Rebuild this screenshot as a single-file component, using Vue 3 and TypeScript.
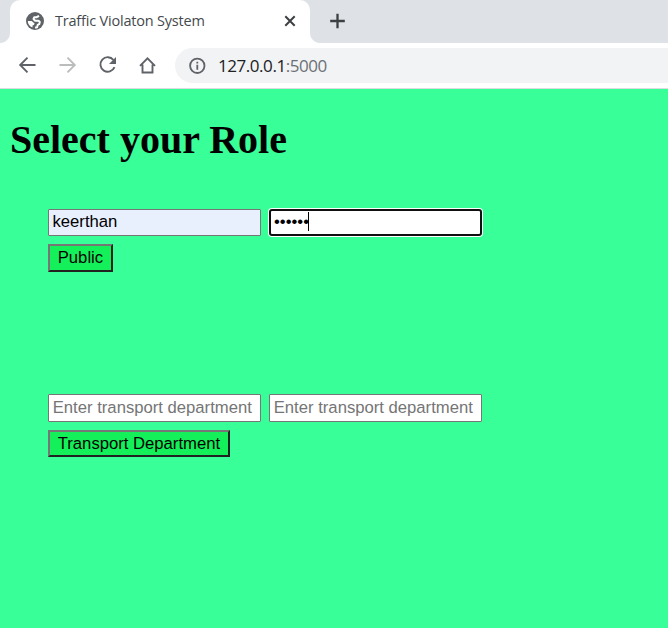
<script setup lang="ts">
import { ref } from 'vue'

const username = ref('keerthan')
const departmentUser = ref('')
const departmentPassword = ref('')
const mask = '•'.repeat(6)
</script>

<template>
  <div class="browser">
    <div class="tabstrip">
      <div class="tab">
        <svg class="globe" viewBox="0 0 20 20">
          <circle cx="10" cy="10" r="9" fill="#5f6368" />
          <path fill="none" stroke="#fff" stroke-width="2" stroke-linejoin="round" d="M14 4.800l-2.300 1.400H9.300L8.500 8l1.700 1.700h3.300l1.300 1.300-.6 2.200-1.500.7-.6 2.300-2 .6" />
          <path fill="#fff" d="M2.800 10h3.900l2.900 2.400-.7 1.500-1.400.5v2.100C4.700 15.500 2.800 13.200 2.800 10z" />
        </svg>
        <span class="title">Traffic Violaton System</span>
        <svg class="close" viewBox="0 0 12 12"><path d="M1.300 1.300l9.400 9.400M10.700 1.300L1.300 10.700" /></svg>
      </div>
      <svg class="plus" viewBox="0 0 16 16"><path d="M8.500 .7v14.600M1.200 8h14.600" /></svg>
    </div>
    <div class="toolbar">
      <svg class="nav" viewBox="0 0 20 20"><path d="M18.500 10H3.500M10.500 2.700L3.200 10l7.300 7.300" /></svg>
      <svg class="nav disabled" viewBox="0 0 20 20"><path d="M2.500 10h15M10.500 2.700l7.300 7.300-7.300 7.300" /></svg>
      <svg class="nav" viewBox="0 0 20 20">
        <path d="M16.500 5A7.300 7.300 0 1 0 17.500 12.200" />
        <path class="solid" d="M19 2v7h-7z" />
      </svg>
      <svg class="nav" viewBox="0 0 20 20"><path d="M3 10.800L10.500 3.300l7.500 7.500M5.500 9.500v8h10v-8" /></svg>
      <div class="address">
        <svg class="info" viewBox="0 0 18 18">
          <circle cx="9.300" cy="8.800" r="7.200" />
          <path d="M9.300 7.700v5.100M9.300 4.700v1.800" />
        </svg>
        <span class="url">127.0.0.1<span class="port">:5000</span></span>
      </div>
    </div>
    <main class="page">
      <h1>Select your Role</h1>
      <form class="role public" @submit.prevent>
        <div class="fields">
          <input v-model="username" class="field filled" type="text" />
          <div class="field focused"><span>{{ mask }}</span><i class="caret"></i></div>
        </div>
        <button type="button">Public</button>
      </form>
      <form class="role department" @submit.prevent>
        <div class="fields">
          <input v-model="departmentUser" class="field" type="text" placeholder="Enter transport department" />
          <input v-model="departmentPassword" class="field" type="text" placeholder="Enter transport department" />
        </div>
        <button type="button">Transport Department</button>
      </form>
    </main>
  </div>
</template>

<style>
body {
  margin: 0;
}
</style>

<style scoped>
.browser {
  width: 668px;
  height: 628px;
  display: flex;
  flex-direction: column;
  overflow: hidden;
  font-family: "Open Sans", "Noto Sans", sans-serif;
}
svg {
  display: block;
  flex: none;
}
.tabstrip {
  height: 43px;
  flex: none;
  display: flex;
  background: #dee1e6;
  padding-left: 10px;
}
.tab {
  position: relative;
  box-sizing: border-box;
  width: 300px;
  height: 43px;
  padding: 0 14px 1px 15px;
  display: flex;
  align-items: center;
  background: #fff;
  border-radius: 10px 10px 0 0;
}
.tab::before,
.tab::after {
  content: "";
  position: absolute;
  bottom: 0;
  width: 10px;
  height: 10px;
}
.tab::before {
  left: -10px;
  background: radial-gradient(circle at 0 0, transparent 9.500px, #fff 10.500px);
}
.tab::after {
  right: -10px;
  background: radial-gradient(circle at 100% 0, transparent 9.500px, #fff 10.500px);
}
.globe {
  width: 20px;
  height: 20px;
}
.title {
  flex: 1;
  margin-left: 10px;
  padding-bottom: 1px;
  font-size: 14.500px;
  letter-spacing: -0.200px;
  color: #45494d;
  white-space: nowrap;
}
.close {
  width: 12px;
  height: 12px;
}
.close path,
.plus path {
  fill: none;
  stroke: #3c4043;
  stroke-width: 2;
}
.plus {
  width: 16px;
  height: 16px;
  margin: 13px 0 0 19px;
}
.plus path {
  stroke-width: 2.300;
}
.toolbar {
  box-sizing: border-box;
  height: 46px;
  flex: none;
  display: flex;
  align-items: center;
  gap: 20px;
  padding-left: 17px;
  border-bottom: 1px solid #dadce0;
  background: #fff;
}
.nav {
  width: 20px;
  height: 20px;
  margin-bottom: 1px;
}
.nav path {
  fill: none;
  stroke: #5f6368;
  stroke-width: 1.900;
}
.nav .solid {
  fill: #5f6368;
  stroke: none;
}
.nav.disabled path {
  stroke: #babcbe;
}
.address {
  flex: 1;
  height: 35px;
  margin-left: -2px;
  padding-left: 13px;
  display: flex;
  align-items: center;
  background: #f1f3f4;
  border-radius: 18px 0 0 18px;
}
.info {
  width: 18px;
  height: 18px;
}
.info circle,
.info path {
  fill: none;
  stroke: #5f6368;
  stroke-width: 1.800;
}
.url {
  margin-left: 12px;
  font-size: 17px;
  letter-spacing: -0.450px;
  color: #202124;
}
.port {
  color: #6c7074;
}
.page {
  flex: 1;
  background: #39ff98;
  padding: 28px 10px 0;
}
h1 {
  margin: 0;
  font: bold 40px/46px "Liberation Serif", serif;
  color: #000;
}
.role {
  padding-left: 38px;
}
.public {
  margin-top: 46px;
}
.department {
  margin-top: 122px;
}
.fields {
  display: flex;
  gap: 8px;
  margin-bottom: 8px;
}
.field {
  box-sizing: border-box;
  width: 213px;
  height: 27px;
  margin: 0;
  padding: 0 3px 1px 3.500px;
  border: 1px solid #767676;
  border-radius: 1px;
  outline: none;
  background: #fff;
  color: #000;
  font: 16.667px/24px "Liberation Sans", sans-serif;
}
.department .field {
  height: 28px;
  padding: 0 3px 0 3.750px;
}
.field::placeholder {
  color: #757575;
  opacity: 1;
}
.filled {
  background: #e8f0fe;
}
.focused {
  display: flex;
  align-items: center;
  padding: 0 2px 1px 3px;
  border: 2px solid #101010;
  border-radius: 3px;
  box-shadow: 0 0 0 1px #fff;
}
.caret {
  width: 1px;
  height: 19px;
  margin: -1px 0 0 -1px;
  background: #000;
}
button {
  display: block;
  box-sizing: border-box;
  height: 28px;
  margin: 0;
  padding: 0 8px 0 7.750px;
  border: 2px solid;
  border-color: #767676 #212121 #212121 #767676;
  border-radius: 0;
  background: #14f05a;
  color: #000;
  font: 16.667px/22px "Liberation Sans", sans-serif;
}
.department button {
  height: 27px;
}
</style>
